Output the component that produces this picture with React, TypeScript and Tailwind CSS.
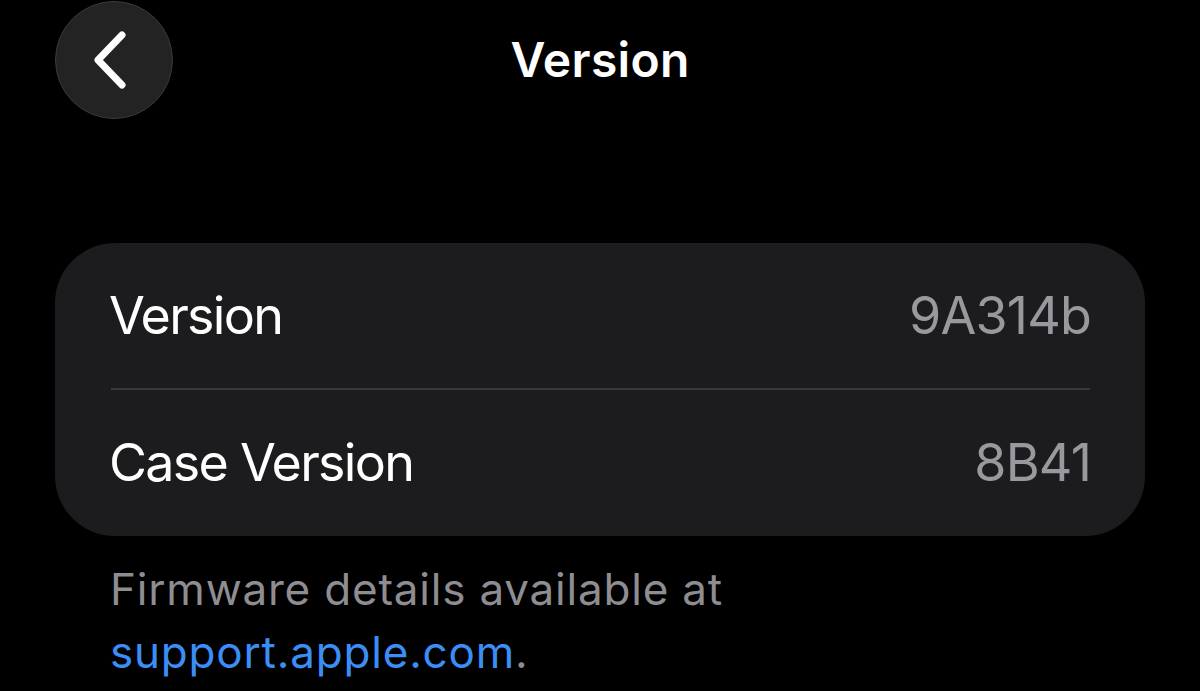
export default function App() {
  return (
    <div
      className="w-[1200px] h-[691px] bg-black overflow-hidden text-white"
      style={{ fontFamily: "Inter, 'Noto Sans', sans-serif" }}
    >
      {/* Header */}
      <div className="relative h-[120px] flex items-center justify-center">
        <button className="absolute left-[55px] top-[1px] w-[118px] h-[118px] rounded-full bg-[#232323] border border-[#3a3a3a] flex items-center justify-center">
          <svg width="44" height="60" viewBox="0 0 44 60" fill="none" className="mr-[4px]">
            <path
              d="M32 5 L8 30 L32 55"
              stroke="white"
              strokeWidth="7"
              strokeLinecap="round"
              strokeLinejoin="round"
            />
          </svg>
        </button>
        <h1 className="text-[48px] font-semibold leading-none tracking-[0.3px]">Version</h1>
      </div>

      {/* Card */}
      <div className="mt-[123px] mx-[55px] rounded-[60px] bg-[#1c1c1e]">
        <div className="h-[145px] pl-[54px] pr-[54px] flex items-center justify-between">
          <span className="text-[52px] leading-none tracking-[-1.7px]">Version</span>
          <span className="text-[52px] leading-none tracking-[-0.8px] text-[#98989f]">9A314b</span>
        </div>
        <div className="ml-[56px] mr-[55px] h-[2px] bg-[#38383a]" />
        <div className="h-[146px] pl-[54px] pr-[54px] flex items-center justify-between">
          <span className="text-[52px] leading-none tracking-[-1.7px]">Case Version</span>
          <span className="text-[52px] leading-none tracking-[-0.8px] text-[#98989f]">8B41</span>
        </div>
      </div>

      {/* Footer */}
      <p className="mt-[22px] pl-[110px] text-[44px] leading-[63px] tracking-[0.8px] text-[#8d8d92]">
        Firmware details available at
        <br />
        <span className="text-[#3a8ef6]">support.apple.com</span>.
      </p>
    </div>
  );
}
